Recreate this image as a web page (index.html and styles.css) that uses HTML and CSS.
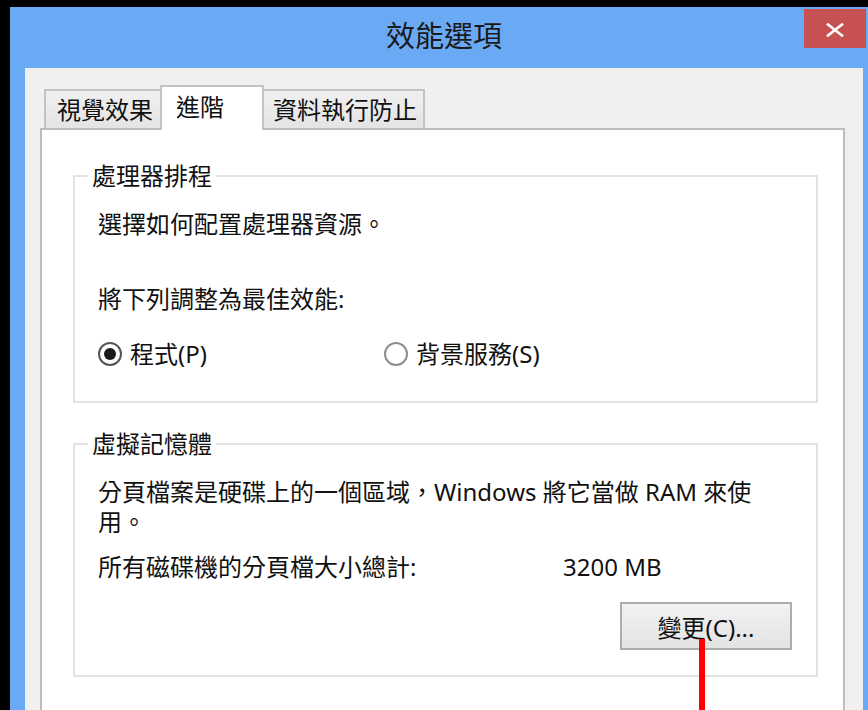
FILE: index.html
```html
<!DOCTYPE html>
<html lang="zh-Hant">
<head>
<meta charset="utf-8">
<title>效能選項</title>
<link rel="stylesheet" href="styles.css">
</head>
<body>
  <div class="window">
    <div class="titlebar">
      <span class="spacer"></span>
      <span class="title">效能選項</span>
      <button class="close" type="button" aria-label="關閉">
        <svg width="18" height="14" viewBox="0 0 18 14">
          <path d="M2 1.5 L16 12.5 M16 1.5 L2 12.5" stroke="#fff" stroke-width="2.6" stroke-linecap="square" fill="none"/>
        </svg>
      </button>
    </div>

    <div class="client">
      <div class="tabs">
        <div class="tab tab-first">視覺效果</div>
        <div class="tab tab-active">進階</div>
        <div class="tab tab-last">資料執行防止</div>
      </div>

      <div class="panel">
        <fieldset class="group group-cpu">
          <legend>處理器排程</legend>
          <p class="line">選擇如何配置處理器資源。</p>
          <p class="line line-gap">將下列調整為最佳效能:</p>
          <div class="radios">
            <label class="radio radio-first"><span class="radio-mark checked"></span>程式(P)</label>
            <label class="radio"><span class="radio-mark"></span>背景服務(S)</label>
          </div>
        </fieldset>

        <fieldset class="group group-vm">
          <legend>虛擬記憶體</legend>
          <p class="line">分頁檔案是硬碟上的一個區域，Windows 將它當做 RAM 來使<br>用。</p>
          <div class="stat">
            <span>所有磁碟機的分頁檔大小總計:</span>
            <span>3200 MB</span>
          </div>
          <div class="actions">
            <button class="btn" type="button">變更(C)...</button>
          </div>
        </fieldset>
      </div>
    </div>
  </div>

  <div class="pointer"></div>
</body>
</html>
```

FILE: styles.css
```css
html, body {
  margin: 0;
  padding: 0;
}

body {
  width: 868px;
  height: 710px;
  overflow: hidden;
  background: #000;
  position: relative;
  font-family: "Noto Sans", "Noto Sans CJK TC", sans-serif;
  color: #111;
}

/* window frame */
.window {
  margin: 7px 0 0 10px;
  width: 858px;
  height: 740px;
  background: #6aaaf4;
  display: flex;
  flex-direction: column;
}

.titlebar {
  height: 61px;
  flex: none;
  display: grid;
  grid-template-columns: 64px 1fr 64px;
  align-items: start;
}

.title {
  align-self: center;
  text-align: center;
  padding-left: 10px;
  padding-bottom: 3px;
  font-size: 29px;
  line-height: 40px;
  color: #1a1a1a;
}

.close {
  margin-top: 2px;
  width: 62px;
  height: 39px;
  border: 0;
  padding: 0;
  background: #c75050;
  display: flex;
  align-items: center;
  justify-content: center;
}

.close svg {
  display: block;
  margin-top: 3px;
}

/* client area */
.client {
  flex: 1;
  margin: 0 5px 0 15px;
  background: #f0f0f0;
  padding: 17px 18px 0 15px;
}

.tabs {
  display: flex;
  align-items: flex-end;
  height: 43px;
  margin-left: 4px;
  position: relative;
  z-index: 1;
}

.tab {
  box-sizing: border-box;
  height: 39px;
  border: 2px solid #c3c3c3;
  border-bottom: 0;
  background: linear-gradient(#f0f0f0, #e4e4e4);
  font-size: 24px;
  line-height: 35px;
  white-space: nowrap;
}

.tab-first {
  width: 116px;
  border-right: 0;
  padding-left: 11px;
  padding-top: 1px;
}

.tab-active {
  width: 104px;
  height: 45px;
  margin-bottom: -2px;
  background: #fff;
  padding-left: 14px;
  line-height: 39px;
}

.tab-last {
  width: 161px;
  border-left: 0;
  padding-left: 9px;
  padding-top: 1px;
}

.panel {
  box-sizing: border-box;
  height: 640px;
  background: #fff;
  border: 2px solid #bdbdbd;
  padding: 31px 0 0 31px;
}

/* group boxes */
.group {
  box-sizing: border-box;
  width: 745px;
  margin: 0;
  min-width: 0;
  border: 2px solid #e2e2e2;
  padding: 18px 23px 32px 23px;
  font-size: 24px;
}

.group legend {
  margin-left: -10px;
  padding: 0 4px;
  line-height: 30px;
}

.group-vm {
  margin-top: 26px;
  padding-bottom: 25px;
}

.line {
  margin: 0;
  line-height: 30px;
}

.line-gap {
  margin-top: 45px;
}

.radios {
  display: flex;
  margin-top: 25px;
  height: 30px;
  align-items: center;
}

.radio {
  display: flex;
  align-items: center;
  gap: 8px;
  line-height: 30px;
}

.radio-first {
  width: 286px;
}

.radio-mark {
  box-sizing: border-box;
  width: 24px;
  height: 24px;
  border-radius: 50%;
  border: 2px solid #8e8e8e;
  background: #fff;
  display: flex;
  align-items: center;
  justify-content: center;
}

.radio-mark.checked {
  border-color: #555;
}

.radio-mark.checked::after {
  content: "";
  width: 12px;
  height: 12px;
  border-radius: 50%;
  background: #1a1a1a;
}

.stat {
  display: grid;
  grid-template-columns: 465px auto;
  margin-top: 15px;
  line-height: 30px;
}

.actions {
  display: flex;
  justify-content: flex-end;
  margin-top: 20px;
  padding-right: 1px;
}

.btn {
  box-sizing: border-box;
  width: 172px;
  height: 48px;
  border: 2px solid #adadad;
  background: linear-gradient(#f2f2f2, #e3e3e3);
  font-family: inherit;
  font-size: 24px;
  color: #111;
  padding: 0;
}

/* annotation line pointing at the button */
.pointer {
  position: absolute;
  left: 699px;
  top: 639px;
  width: 6px;
  height: 71px;
  background: #ff0000;
}
```
